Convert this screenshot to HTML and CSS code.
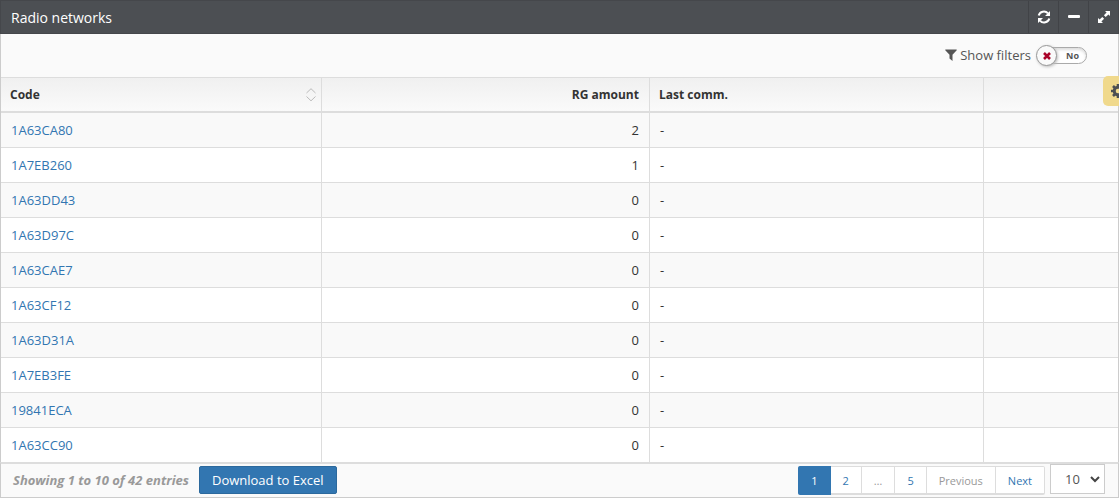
FILE: index.html
```html
<!DOCTYPE html>
<html lang="en">
<head>
    <meta charset="UTF-8">
    <meta name="viewport" content="width=device-width, initial-scale=1.0">
    <title>Radio networks</title>
    <link rel="stylesheet" href="styles.css">
</head>
<body>
    <section class="widget">
        <header class="widget-header">
            <h2>Radio networks</h2>
            <div class="widget-tools">
                <button type="button" aria-label="Refresh">
                    <svg width="14" height="14" viewBox="0 0 14 14" fill="none" stroke="#fff" stroke-width="2">
                        <path d="M1.7 5.6A5.4 5.4 0 0 1 11 3.4M12.3 8.4A5.4 5.4 0 0 1 3 10.6"/>
                        <path d="M13 1v5H8zM1 13V8h5z" fill="#fff" stroke="none"/>
                    </svg>
                </button>
                <button type="button" aria-label="Collapse">
                    <svg width="14" height="14" viewBox="0 0 14 14"><rect x="1" y="5" width="12" height="3" rx="1" fill="#fff"/></svg>
                </button>
                <button type="button" aria-label="Fullscreen">
                    <svg width="14" height="14" viewBox="0 0 14 14" fill="#fff">
                        <path d="M8 1h5v5l-1.600-1.600-2.700 2.700-1.800-1.800 2.700-2.700zM6 13H1V8l1.600 1.600 2.700-2.700 1.800 1.800-2.700 2.700z"/>
                    </svg>
                </button>
            </div>
        </header>

        <div class="toolbar">
            <svg width="12" height="12" viewBox="0 0 12 12" fill="#555"><path d="M.5.500h11q.6.500 0 1L7.500 5.800V12L4.500 9.500V5.800L.5 1.500Q-.1 1 .5.500z"/></svg>
            <label for="showFilters">Show filters</label>
            <span class="switch">
                <input type="checkbox" id="showFilters">
                <span class="switch-text">No</span>
                <span class="switch-knob">
                    <svg width="8" height="8" viewBox="0 0 8 8" stroke="#a90329" stroke-width="2.600"><path d="M1 1l6 6M7 1L1 7"/></svg>
                </span>
            </span>
        </div>

        <table class="data-table">
            <thead>
                <tr>
                    <th class="col-code">
                        <div class="sortable">Code
                            <svg width="10" height="14" viewBox="0 0 10 14" fill="none" stroke="#bbb"><path d="M.5 5L5 .7 9.500 5M.5 8.500L5 12.800 9.500 8.500"/></svg>
                        </div>
                    </th>
                    <th class="col-amount number">RG amount</th>
                    <th class="col-comm">Last comm.</th>
                    <th></th>
                </tr>
            </thead>
            <tbody>
                <tr><td><a href="#">1A63CA80</a></td><td class="number">2</td><td>-</td><td></td></tr>
                <tr><td><a href="#">1A7EB260</a></td><td class="number">1</td><td>-</td><td></td></tr>
                <tr><td><a href="#">1A63DD43</a></td><td class="number">0</td><td>-</td><td></td></tr>
                <tr><td><a href="#">1A63D97C</a></td><td class="number">0</td><td>-</td><td></td></tr>
                <tr><td><a href="#">1A63CAE7</a></td><td class="number">0</td><td>-</td><td></td></tr>
                <tr><td><a href="#">1A63CF12</a></td><td class="number">0</td><td>-</td><td></td></tr>
                <tr><td><a href="#">1A63D31A</a></td><td class="number">0</td><td>-</td><td></td></tr>
                <tr><td><a href="#">1A7EB3FE</a></td><td class="number">0</td><td>-</td><td></td></tr>
                <tr><td><a href="#">19841ECA</a></td><td class="number">0</td><td>-</td><td></td></tr>
                <tr><td><a href="#">1A63CC90</a></td><td class="number">0</td><td>-</td><td></td></tr>
            </tbody>
        </table>

        <footer class="table-footer">
            <span class="table-info">Showing 1 to 10 of 42 entries</span>
            <button type="button" class="btn-primary">Download to Excel</button>
            <ul class="pagination">
                <li class="active"><a href="#">1</a></li>
                <li><a href="#">2</a></li>
                <li class="disabled"><a href="#">…</a></li>
                <li><a href="#">5</a></li>
                <li class="disabled"><a href="#">Previous</a></li>
                <li><a href="#">Next</a></li>
            </ul>
            <span class="page-length">
                <select aria-label="Entries per page">
                    <option>10</option>
                    <option>25</option>
                    <option>50</option>
                </select>
                <svg width="10" height="7" viewBox="0 0 10 7" fill="none" stroke="#444" stroke-width="2"><path d="M1 1l4 4 4-4"/></svg>
            </span>
        </footer>
    </section>

    <button type="button" class="settings" aria-label="Settings">
        <svg width="14" height="14" viewBox="0 0 14 14" fill="none" stroke="#4c4f53">
            <circle cx="7" cy="7" r="3.800" stroke-width="3"/>
            <path d="M7 0v3M7 11v3M0 7h3M11 7h3M2 2l2 2M10 10l2 2M2 12l2-2M10 4l2-2" stroke-width="2.600"/>
        </svg>
    </button>
</body>
</html>
```

FILE: styles.css
```css
* {
    box-sizing: border-box;
}
body {
    font-family: "Open Sans", Arial, Helvetica, sans-serif;
    font-size: 13px;
    line-height: 18px;
    color: #333;
    background: #fff;
    margin: 0;
    overflow-x: hidden;
}
button, select {
    font-family: inherit;
    cursor: pointer;
}
a {
    color: #3276b1;
    text-decoration: none;
}
.widget-header {
    display: flex;
    justify-content: space-between;
    height: 34px;
    color: #fff;
    background: #4c4f53;
    border: 1px solid #45474b;
}
.widget-header h2 {
    margin: 0;
    padding-left: 10px;
    font-size: 14px;
    font-weight: normal;
    line-height: 33px;
}
.widget-tools {
    display: flex;
}
.widget-tools button {
    display: flex;
    align-items: center;
    justify-content: center;
    width: 30px;
    padding: 0;
    background: none;
    border: 0;
    border-left: 1px solid #414347;
}
.toolbar {
    display: flex;
    align-items: center;
    justify-content: flex-end;
    height: 43px;
    padding: 0 31px 2px 0;
    color: #555;
    background: #fafafa;
    border: solid #ccc;
    border-width: 0 1px;
}
.toolbar label {
    margin: 0 6px 0 3px;
}
.switch {
    position: relative;
    width: 50px;
    height: 17px;
    margin-top: 2px;
}
.switch input {
    display: block;
    width: 100%;
    height: 100%;
    margin: 0;
    appearance: none;
    background: #fff;
    border: 1px solid #aaa;
    border-radius: 9px;
    box-shadow: inset 0 2px 3px #ddd;
    cursor: pointer;
}
.switch-text {
    position: absolute;
    top: 0;
    right: 8px;
    font-size: 9px;
    font-weight: bold;
    line-height: 17px;
    pointer-events: none;
}
.switch-knob {
    position: absolute;
    top: -2px;
    left: -1px;
    display: flex;
    align-items: center;
    justify-content: center;
    width: 21px;
    height: 21px;
    background: #fafafa;
    border: 1px solid #999;
    border-radius: 50%;
    box-shadow: 1px 1px 3px #bbb;
    pointer-events: none;
}
.data-table {
    width: 100%;
    table-layout: fixed;
    border-collapse: separate;
    border-spacing: 0;
    border: solid #ccc;
    border-width: 0 1px;
}
.col-code {
    width: 28.7%;
}
.col-amount {
    width: 29.4%;
}
.col-comm {
    width: 29.9%;
}
.data-table th {
    height: 36px;
    padding: 0 10px 0 9px;
    font-size: 12px;
    text-align: left;
    background: linear-gradient(#f0f0f0, #fafafa);
    border: solid #ddd;
    border-width: 1px 1px 2px 0;
}
.data-table td {
    height: 35px;
    padding: 0 10px;
    border: solid #ddd;
    border-width: 0 1px 1px 0;
}
.data-table th:last-child, .data-table td:last-child {
    border-right: 0;
}
.data-table tbody tr:nth-child(odd) {
    background: #f9f9f9;
}
.data-table tbody tr:last-child td {
    height: 34px;
    border-bottom: 0;
}
.data-table .number {
    text-align: right;
}
.sortable {
    display: flex;
    align-items: center;
    justify-content: space-between;
    margin-right: -5px;
}
.table-footer {
    display: flex;
    align-items: flex-start;
    height: 36px;
    padding: 0 13px 0 12px;
    background: #fafafa;
    border: solid #ccc;
    border-width: 2px 1px 1px;
    border-top-color: #ddd;
}
.table-info {
    padding-top: 7px;
    margin-right: 10px;
    color: #999;
    font-size: 13px;
    font-style: italic;
    font-weight: bold;
}
.btn-primary {
    height: 28px;
    margin-top: 2px;
    padding: 0 12px;
    color: #fff;
    font-size: 13px;
    background: #3276b1;
    border: 1px solid #2c699d;
    border-radius: 2px;
}
.pagination {
    display: flex;
    margin: 2px 5px 0 auto;
    padding: 0;
    list-style: none;
}
.pagination a {
    display: block;
    height: 29px;
    padding: 0 12px;
    font-size: 11px;
    line-height: 28px;
    background: #fff;
    border: 1px solid #ddd;
    border-left-width: 0;
    border-bottom-width: 2px;
}
.pagination .active a {
    color: #fff;
    background: #3276b1;
    border-color: #3276b1;
    border-left-width: 1px;
    border-radius: 2px 0 0 2px;
}
.pagination .disabled a {
    color: #999;
}
.pagination li:last-child a {
    border-radius: 0 2px 2px 0;
}
.page-length {
    position: relative;
}
.page-length select {
    display: block;
    width: 55px;
    height: 30px;
    padding: 0 14px;
    color: #555;
    font-size: 13px;
    appearance: none;
    background: #fff;
    border: 1px solid #ccc;
    border-radius: 0;
}
.page-length svg {
    position: absolute;
    top: 12px;
    right: 5px;
    pointer-events: none;
}
.settings {
    position: absolute;
    top: 76px;
    right: 0;
    display: flex;
    align-items: center;
    width: 16px;
    height: 30px;
    padding: 0 0 0 8px;
    overflow: hidden;
    background: #f0d98c;
    border: 0;
    border-radius: 5px 0 0 5px;
}
.settings svg {
    flex: none;
}
```
